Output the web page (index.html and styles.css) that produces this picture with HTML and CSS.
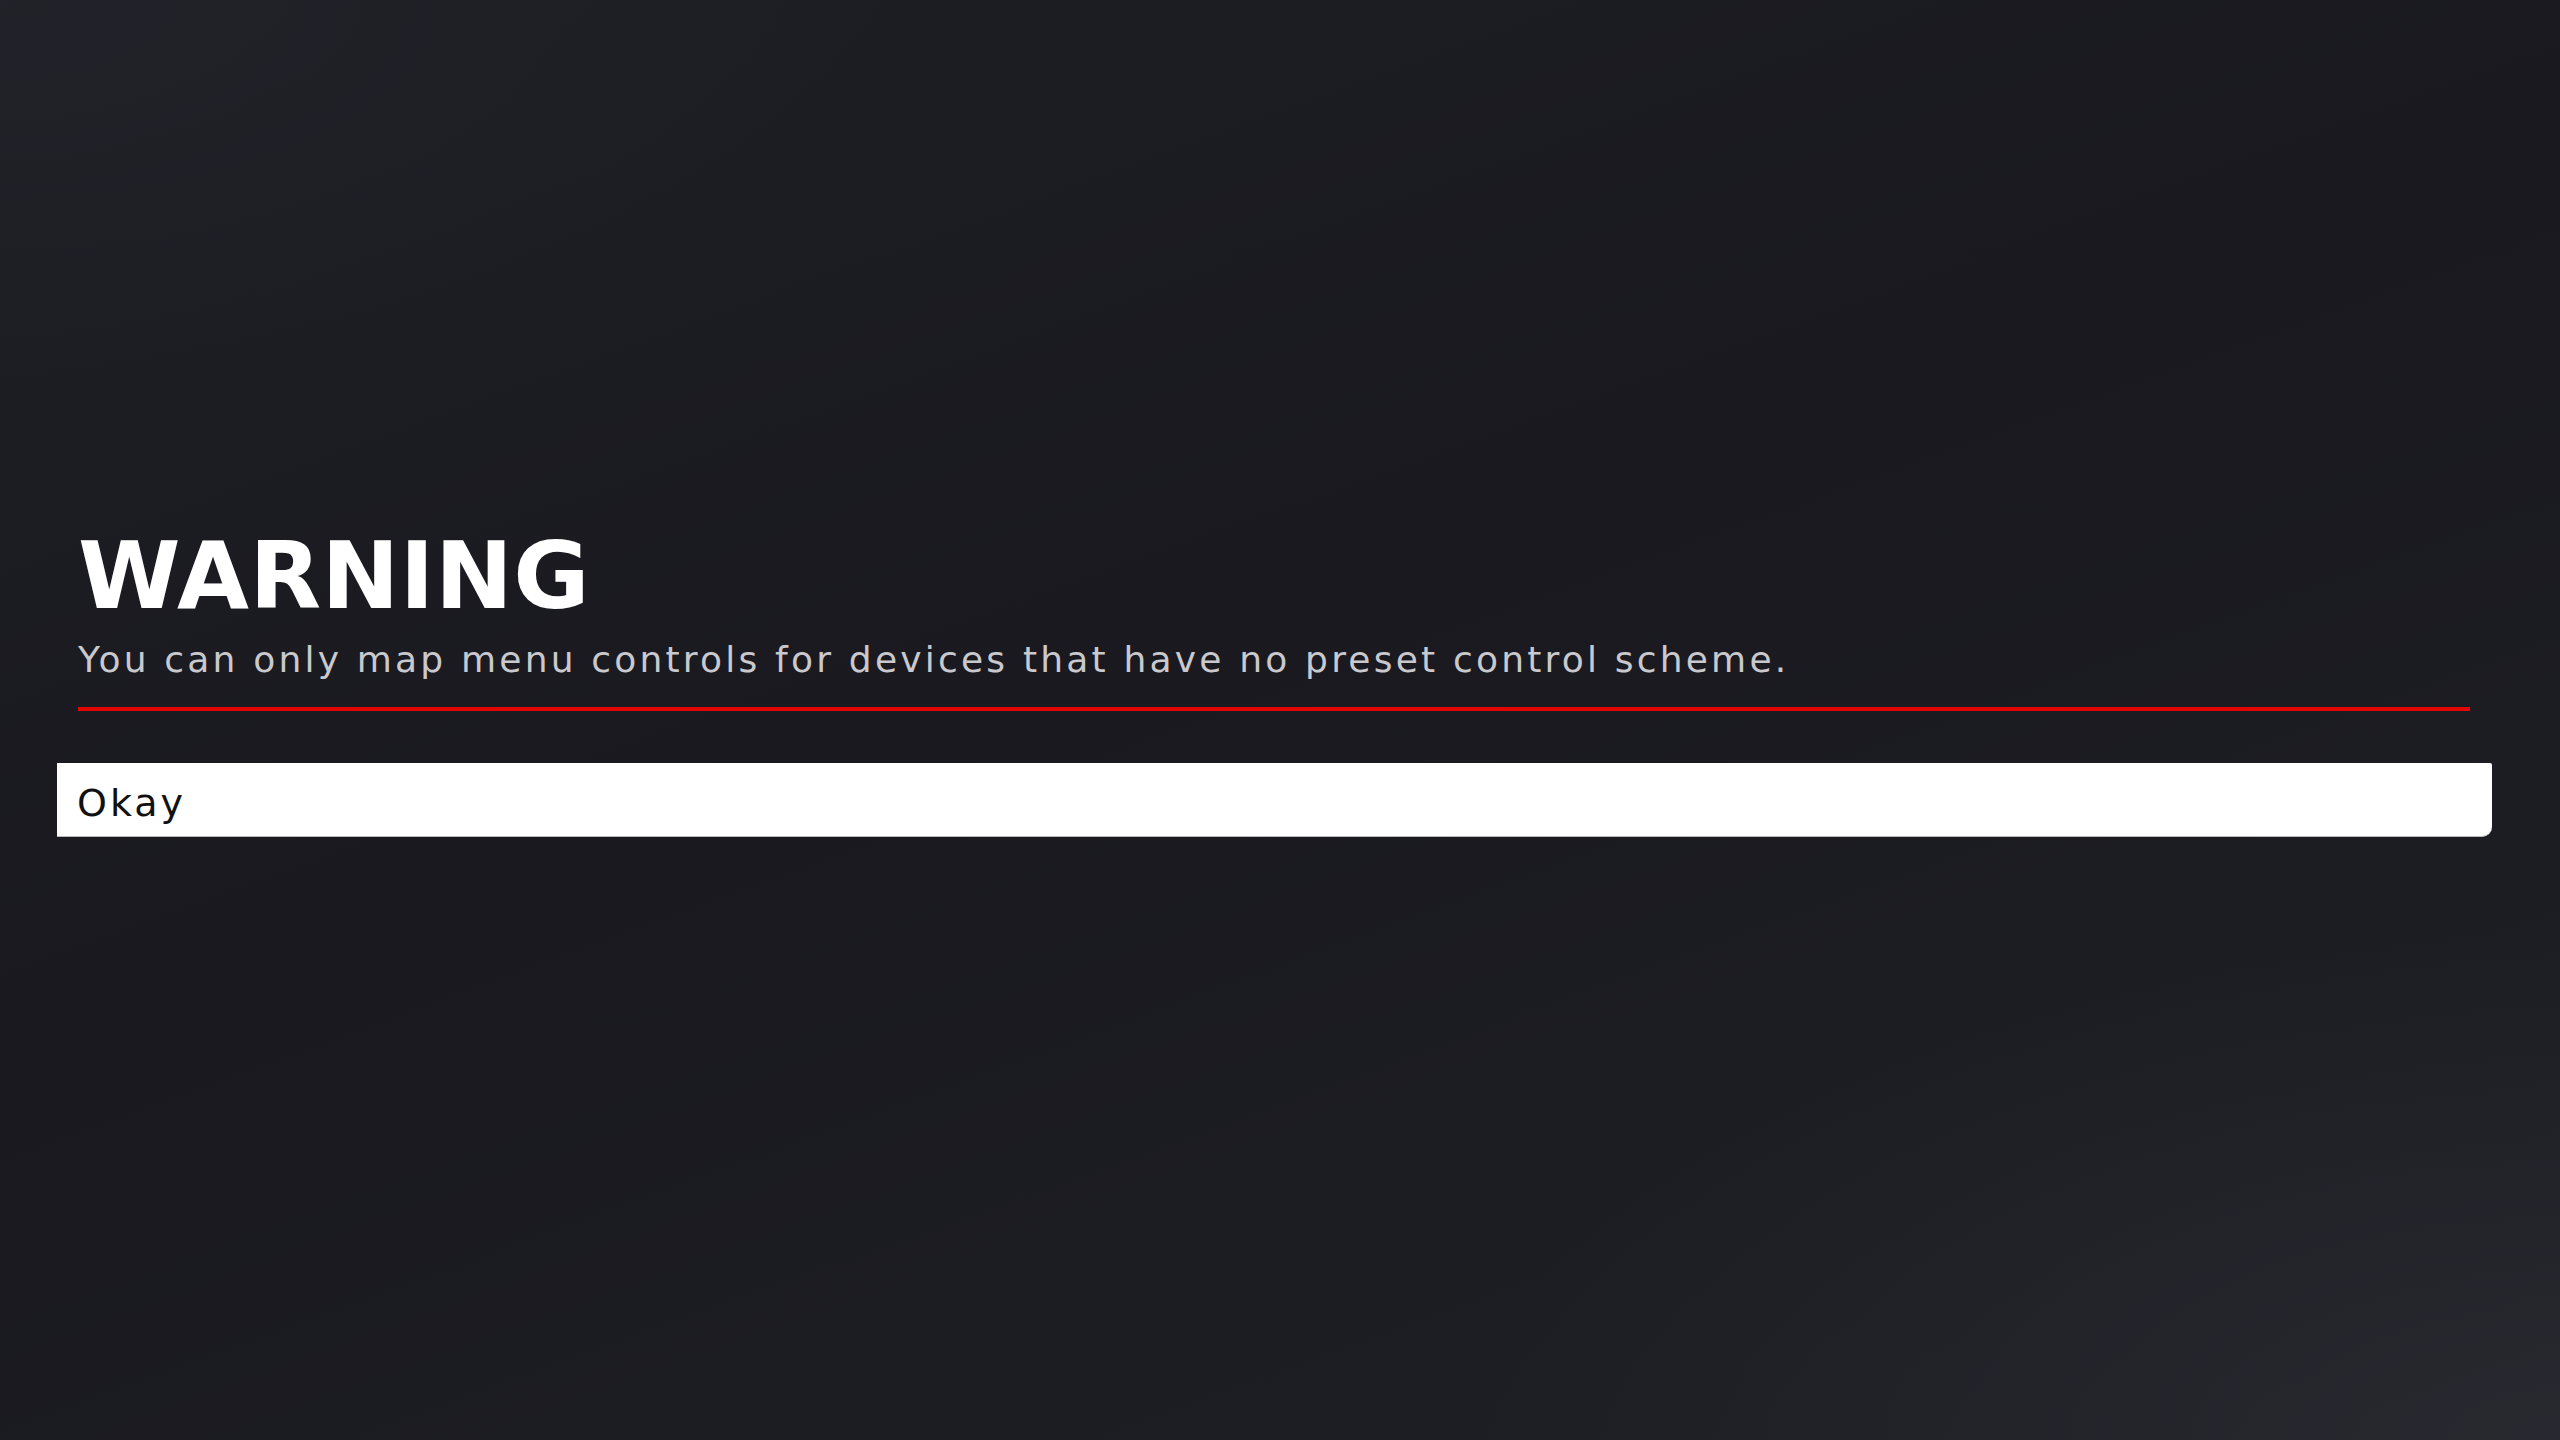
FILE: index.html
```html
<!DOCTYPE html>
<html lang="en">
<head>
  <meta charset="UTF-8">
  <title>Warning</title>
  <link rel="stylesheet" href="styles.css">
</head>
<body>
  <!-- Warning dialog -->
  <main class="dialog">
    <h1 class="dialog-title">WARNING</h1>
    <p class="dialog-text">You can only map menu controls for devices that have no preset control scheme.</p>
    <div class="dialog-rule"></div>

    <div class="dialog-options">
      <button class="option option-active" type="button">Okay</button>
    </div>
  </main>
</body>
</html>
```

FILE: styles.css
```css
:root {
  --bg-dark: #1b1b21;
  --text-light: #ffffff;
  --text-muted: #c9c9cd;
  --accent-red: #e10600;
}

* {
  margin: 0;
  padding: 0;
  box-sizing: border-box;
}

html,
body {
  height: 100%;
}

body {
  font-family: "DejaVu Sans", sans-serif;
  color: var(--text-light);
  background-color: var(--bg-dark);
  background-image:
    radial-gradient(ellipse 60% 50% at 100% 100%, rgba(48, 48, 56, 0.55), transparent 70%),
    radial-gradient(ellipse 50% 40% at 0% 0%, rgba(36, 36, 44, 0.6), transparent 70%),
    linear-gradient(160deg, #1e1e25 0%, #19191f 45%, #1f1f26 100%);
  overflow: hidden;
}

/* Dialog */
.dialog {
  padding: 530px 90px 0 78px;
}

.dialog-title {
  font-size: 93px;
  font-weight: bold;
  line-height: 1;
  letter-spacing: 0.5px;
}

.dialog-text {
  margin-top: 19px;
  font-size: 36px;
  line-height: 1;
  color: var(--text-muted);
  letter-spacing: 3.2px;
}

.dialog-rule {
  margin-top: 29px;
  height: 4px;
  background-color: var(--accent-red);
}

/* Options */
.dialog-options {
  margin: 52px -22px 0 -21px;
}

.option {
  display: block;
  width: 100%;
  padding: 21px 20px 15px;
  font-family: inherit;
  font-size: 38px;
  line-height: 1;
  text-align: left;
  border: none;
  border-radius: 0 2px 10px 0;
  background: transparent;
  color: var(--text-light);
  letter-spacing: 3px;
  cursor: pointer;
}

.option-active {
  background-color: #ffffff;
  color: #111111;
  border-bottom: 1px solid #b9b9bd;
  padding-bottom: 14px;
}
```
